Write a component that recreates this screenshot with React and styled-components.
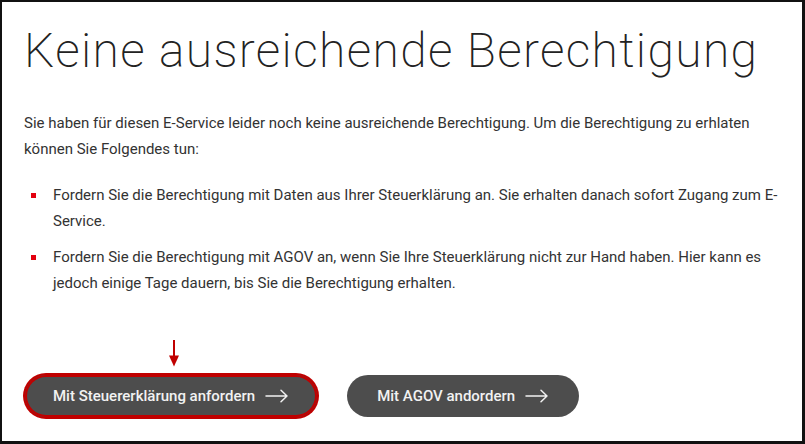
import styled, { createGlobalStyle } from "styled-components";

const GlobalStyle = createGlobalStyle`
  html, body {
    margin: 0;
    padding: 0;
    background: #ffffff;
  }
  body {
    font-family: Roboto, "Liberation Sans", Arial, sans-serif;
    color: #333333;
  }
`;

const items = [
  "Fordern Sie die Berechtigung mit Daten aus Ihrer Steuerklärung an. Sie erhalten danach sofort Zugang zum E-Service.",
  "Fordern Sie die Berechtigung mit AGOV an, wenn Sie Ihre Steuerklärung nicht zur Hand haben. Hier kann es jedoch einige Tage dauern, bis Sie die Berechtigung erhalten.",
];

function ArrowRight() {
  return (
    <svg width="24" height="14" viewBox="0 0 24 14" fill="none">
      <path
        d="M1 7h21M16 1.2l6 5.8-6 5.8"
        stroke="currentColor"
        strokeWidth="1.5"
        strokeLinecap="round"
        strokeLinejoin="round"
      />
    </svg>
  );
}

function Pointer() {
  return (
    <PointerMark width="10" height="27" viewBox="0 0 10 27">
      <rect x="4" y="0" width="2" height="18" fill="#c00000" />
      <path d="M0 15.5h10L5 26.5z" fill="#c00000" />
    </PointerMark>
  );
}

export default function App() {
  return (
    <>
      <GlobalStyle />
      <Frame>
        <Title>Keine ausreichende Berechtigung</Title>
        <Intro>
          Sie haben für diesen E-Service leider noch keine ausreichende
          Berechtigung. Um die Berechtigung zu erhlaten können Sie Folgendes
          tun:
        </Intro>
        <List>
          {items.map((text) => (
            <Item key={text}>{text}</Item>
          ))}
        </List>
        <Actions>
          <ButtonSlot>
            <Pointer />
            <ActionButton type="button" highlighted>
              Mit Steuererklärung anfordern
              <ArrowRight />
            </ActionButton>
          </ButtonSlot>
          <ButtonSlot>
            <ActionButton type="button" wide>
              Mit AGOV andordern
              <ArrowRight />
            </ActionButton>
          </ButtonSlot>
        </Actions>
      </Frame>
    </>
  );
}

//Styles
const Frame = styled.div`
  box-sizing: border-box;
  width: 805px;
  height: 444px;
  border: 2px solid #111111;
  border-right-width: 3px;
  border-bottom-width: 3px;
  padding: 20px 16px 0 22px;
  display: flex;
  flex-direction: column;
  overflow: hidden;
`;

const Title = styled.h1`
  margin: 0;
  font-size: 48px;
  line-height: 58px;
  font-weight: 200;
  letter-spacing: 1.35px;
  color: #222222;
  white-space: nowrap;
`;

const Intro = styled.p`
  margin: 30px 0 0 0;
  font-size: 15px;
  line-height: 26px;
  color: #333333;
`;

const List = styled.ul`
  list-style: none;
  margin: 20px 0 0 0;
  padding: 0 0 0 7px;
  display: flex;
  flex-direction: column;
  gap: 10px;
`;

const Item = styled.li`
  position: relative;
  padding-left: 22px;
  font-size: 15px;
  line-height: 26px;
  color: #333333;

  &::before {
    content: "";
    position: absolute;
    left: 0;
    top: 11px;
    width: 5px;
    height: 5px;
    background: #e3000f;
  }
`;

const Actions = styled.div`
  display: flex;
  gap: 30px;
  margin-top: 79px;
  padding-left: 1px;
`;

const ButtonSlot = styled.div`
  position: relative;
`;

const PointerMark = styled.svg`
  position: absolute;
  left: 144px;
  top: -35px;
`;

const ActionButton = styled.button`
  display: flex;
  align-items: center;
  gap: 10px;
  height: 42px;
  padding: 0 ${({ wide }) => (wide ? "30px" : "28px")};
  border: none;
  border-radius: 21px;
  background: #4d4d4d;
  color: #f2f2f2;
  font-family: Roboto, "Liberation Sans", Arial, sans-serif;
  font-size: 15px;
  font-weight: 500;
  cursor: pointer;
  box-shadow: ${({ highlighted }) =>
    highlighted ? "0 0 0 2px #c00000, inset 0 0 0 2px #c00000" : "none"};

  svg {
    flex-shrink: 0;
  }
`;
